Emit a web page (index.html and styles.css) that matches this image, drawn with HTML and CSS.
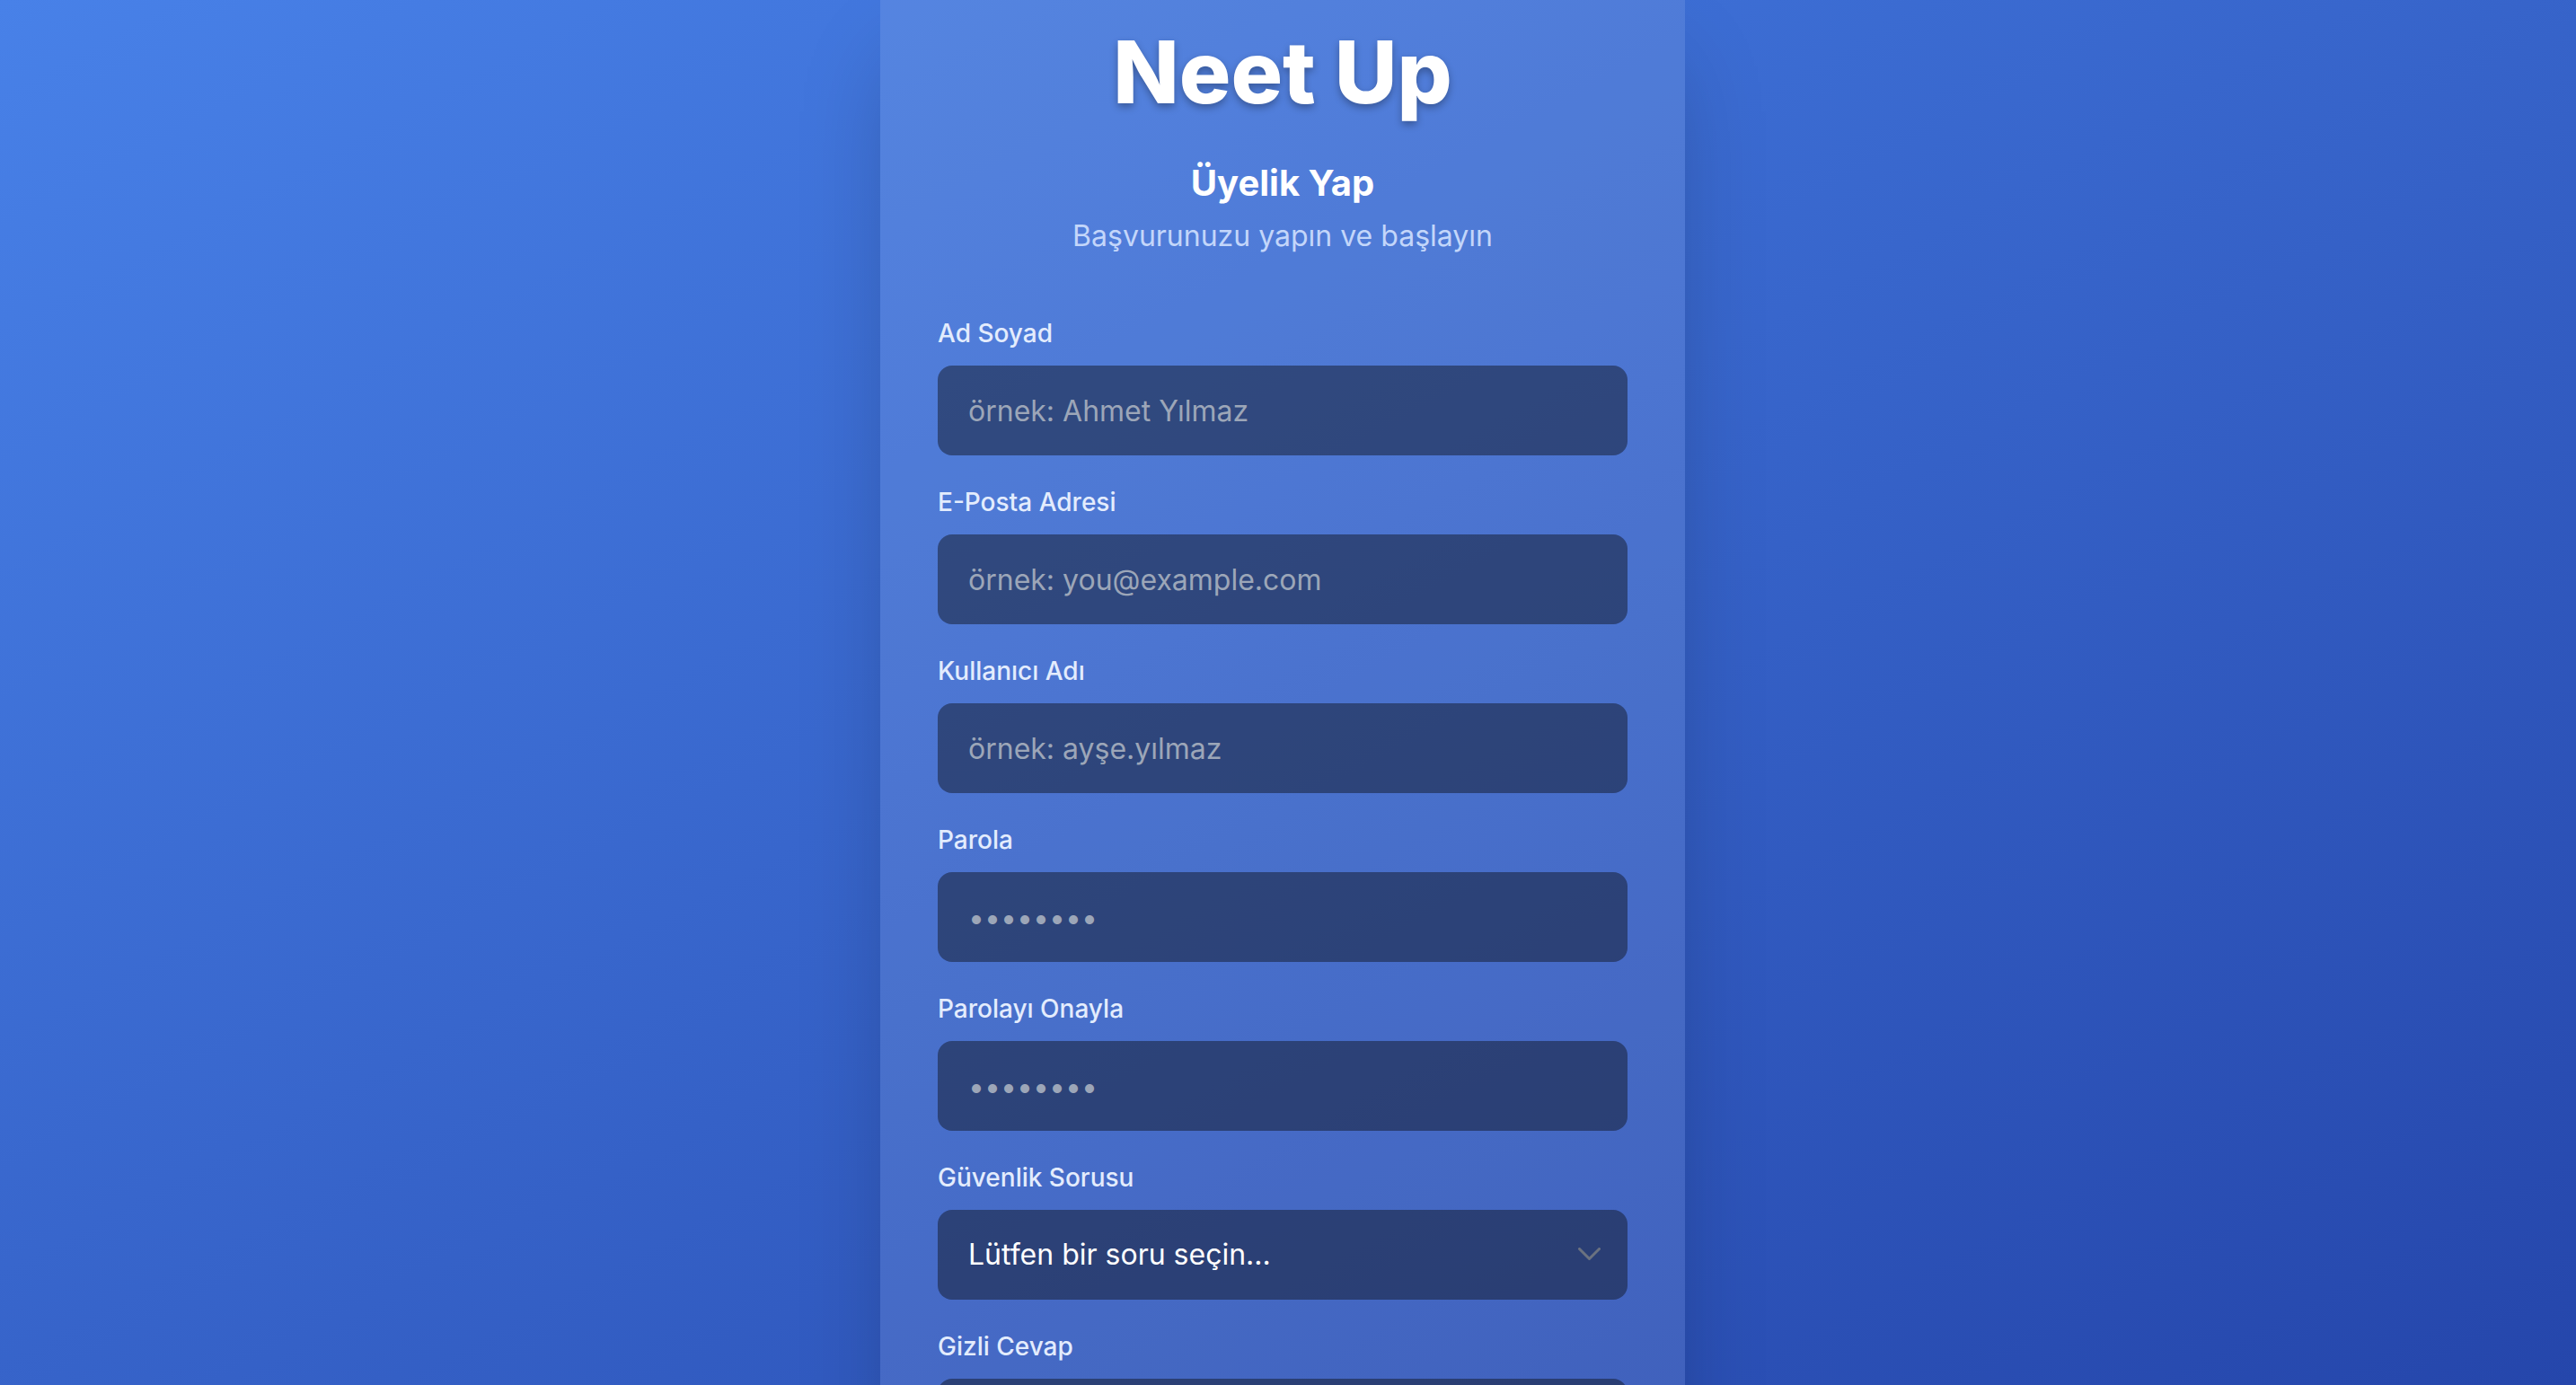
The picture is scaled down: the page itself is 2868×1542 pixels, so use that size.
FILE: index.html
```html
<!DOCTYPE html>
<html lang="tr">
<head>
<meta charset="utf-8">
<title>Neet Up - Üyelik Yap</title>
<link rel="stylesheet" href="styles.css">
</head>
<body>
<div class="page">
  <main class="card">
    <header class="card-header">
      <h1 class="brand">Neet Up</h1>
      <h2 class="title">Üyelik Yap</h2>
      <p class="subtitle">Başvurunuzu yapın ve başlayın</p>
    </header>
    <form class="form">
      <div class="field">
        <label class="label" for="name">Ad Soyad</label>
        <input class="input" id="name" type="text" placeholder="örnek: Ahmet Yılmaz">
      </div>
      <div class="field">
        <label class="label" for="email">E-Posta Adresi</label>
        <input class="input" id="email" type="email" placeholder="örnek: you@example.com">
      </div>
      <div class="field">
        <label class="label" for="user">Kullanıcı Adı</label>
        <input class="input" id="user" type="text" placeholder="örnek: ayşe.yılmaz">
      </div>
      <div class="field">
        <label class="label" for="pass">Parola</label>
        <input class="input" id="pass" type="password" placeholder="••••••••">
      </div>
      <div class="field">
        <label class="label" for="pass2">Parolayı Onayla</label>
        <input class="input" id="pass2" type="password" placeholder="••••••••">
      </div>
      <div class="field">
        <label class="label" for="question">Güvenlik Sorusu</label>
        <div class="select-wrap">
          <select class="input select" id="question">
            <option>Lütfen bir soru seçin...</option>
            <option>İlk evcil hayvanınızın adı nedir?</option>
            <option>Doğduğunuz şehir neresidir?</option>
          </select>
          <svg class="chevron" width="25" height="15" viewBox="0 0 25 15" aria-hidden="true">
            <polyline points="1.5,1.5 12.5,12.5 23.5,1.5" fill="none" stroke="#6b7280" stroke-width="3" stroke-linecap="round" stroke-linejoin="round"/>
          </svg>
        </div>
      </div>
      <div class="field">
        <label class="label" for="answer">Gizli Cevap</label>
        <input class="input" id="answer" type="text">
      </div>
    </form>
  </main>
</div>
</body>
</html>
```

FILE: styles.css
```css
* { box-sizing: border-box; }

html, body {
  margin: 0;
  padding: 0;
  height: 100%;
}

body {
  font-family: Inter, "Noto Sans", "Liberation Sans", sans-serif;
  color: #ffffff;
}

.page {
  height: 100vh;
  overflow: hidden;
  display: flex;
  justify-content: center;
  align-items: flex-start;
  padding-right: 12px;
  background: linear-gradient(to bottom right, #4881e8, #2546ab);
}

.card {
  width: 896px;
  flex: 0 0 896px;
  padding: 32px 64px 64px;
  background: rgba(255, 255, 255, 0.1);
  box-shadow: 0 50px 100px -24px rgba(0, 0, 0, 0.25);
}

.card-header {
  text-align: center;
  margin-bottom: 64px;
}

.brand {
  margin: 0 0 48px;
  font-size: 96px;
  line-height: 96px;
  font-weight: 800;
  color: #ffffff;
  text-shadow: 0 4px 8px rgba(0, 0, 0, 0.3);
}

.title {
  margin: 0 0 7px;
  font-size: 40px;
  line-height: 56px;
  font-weight: 700;
  color: #ffffff;
}

.subtitle {
  margin: 0;
  font-size: 32px;
  line-height: 48px;
  color: #c3d6fa;
}

.form {
  display: flex;
  flex-direction: column;
  gap: 32px;
}

.field {
  display: flex;
  flex-direction: column;
}

.label {
  font-size: 28px;
  line-height: 40px;
  font-weight: 500;
  color: #e3ecfd;
  margin-bottom: 16px;
}

.input {
  display: block;
  width: 100%;
  height: 100px;
  padding: 24px 32px;
  border: 2px solid transparent;
  border-radius: 16px;
  background: rgba(17, 24, 39, 0.5);
  color: #ffffff;
  font-family: inherit;
  font-size: 32px;
  line-height: 48px;
  outline: none;
}

.input::placeholder {
  color: #9ca6b8;
  opacity: 1;
}

.select-wrap {
  position: relative;
}

.select {
  appearance: none;
  -webkit-appearance: none;
}

.chevron {
  position: absolute;
  right: 30px;
  top: 42px;
  pointer-events: none;
}
```
